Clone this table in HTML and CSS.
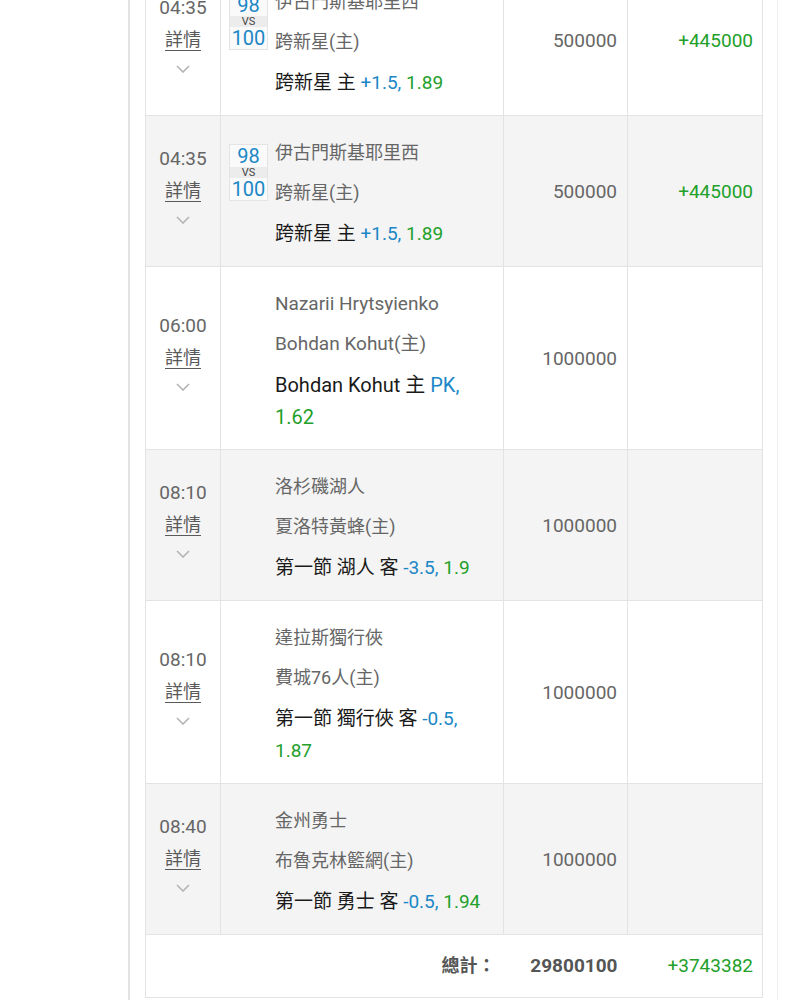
FILE: index.html
```html
<!DOCTYPE html>
<html lang="zh-Hant">
<head>
<meta charset="utf-8">
<title>注單</title>
<link rel="stylesheet" href="styles.css">
</head>
<body>
<div class="frame">
  <table class="bets">
    <colgroup>
      <col class="c-time"><col class="c-match"><col class="c-amount"><col class="c-profit">
    </colgroup>
    <tbody>
      <tr>
        <td class="time-cell">
          <div class="time">04:35</div>
          <div class="detail"><a class="detail-link">詳情</a></div>
          <div class="chev"><svg width="14" height="8" viewBox="0 0 14 8"><path d="M1 1 L7 7 L13 1" fill="none" stroke="#b4b4b4" stroke-width="1.6"/></svg></div>
        </td>
        <td class="match-cell">
          <div class="match">
            <div class="slot">
              <div class="score"><div class="s1">98</div><div class="vs">VS</div><div class="s2">100</div></div>
            </div>
            <div class="info">
              <div class="team">伊古門斯基耶里西</div>
              <div class="team">跨新星(主)</div>
              <div class="bet">跨新星 主 <span class="hc">+1.5,</span> <span class="odds">1.89</span></div>
            </div>
          </div>
        </td>
        <td class="amount">500000</td>
        <td class="profit">+445000</td>
      </tr>
      <tr>
        <td class="time-cell">
          <div class="time">04:35</div>
          <div class="detail"><a class="detail-link">詳情</a></div>
          <div class="chev"><svg width="14" height="8" viewBox="0 0 14 8"><path d="M1 1 L7 7 L13 1" fill="none" stroke="#b4b4b4" stroke-width="1.6"/></svg></div>
        </td>
        <td class="match-cell">
          <div class="match">
            <div class="slot">
              <div class="score"><div class="s1">98</div><div class="vs">VS</div><div class="s2">100</div></div>
            </div>
            <div class="info">
              <div class="team">伊古門斯基耶里西</div>
              <div class="team">跨新星(主)</div>
              <div class="bet">跨新星 主 <span class="hc">+1.5,</span> <span class="odds">1.89</span></div>
            </div>
          </div>
        </td>
        <td class="amount">500000</td>
        <td class="profit">+445000</td>
      </tr>
      <tr>
        <td class="time-cell">
          <div class="time">06:00</div>
          <div class="detail"><a class="detail-link">詳情</a></div>
          <div class="chev"><svg width="14" height="8" viewBox="0 0 14 8"><path d="M1 1 L7 7 L13 1" fill="none" stroke="#b4b4b4" stroke-width="1.6"/></svg></div>
        </td>
        <td class="match-cell">
          <div class="match">
            <div class="slot"></div>
            <div class="info latin">
              <div class="team">Nazarii Hrytsyienko</div>
              <div class="team">Bohdan Kohut(主)</div>
              <div class="bet">Bohdan Kohut 主 <span class="hc">PK,</span> <span class="odds">1.62</span></div>
            </div>
          </div>
        </td>
        <td class="amount">1000000</td>
        <td class="profit"></td>
      </tr>
      <tr>
        <td class="time-cell">
          <div class="time">08:10</div>
          <div class="detail"><a class="detail-link">詳情</a></div>
          <div class="chev"><svg width="14" height="8" viewBox="0 0 14 8"><path d="M1 1 L7 7 L13 1" fill="none" stroke="#b4b4b4" stroke-width="1.6"/></svg></div>
        </td>
        <td class="match-cell">
          <div class="match">
            <div class="slot"></div>
            <div class="info">
              <div class="team">洛杉磯湖人</div>
              <div class="team">夏洛特黃蜂(主)</div>
              <div class="bet">第一節 湖人 客 <span class="hc">-3.5,</span> <span class="odds">1.9</span></div>
            </div>
          </div>
        </td>
        <td class="amount">1000000</td>
        <td class="profit"></td>
      </tr>
      <tr>
        <td class="time-cell">
          <div class="time">08:10</div>
          <div class="detail"><a class="detail-link">詳情</a></div>
          <div class="chev"><svg width="14" height="8" viewBox="0 0 14 8"><path d="M1 1 L7 7 L13 1" fill="none" stroke="#b4b4b4" stroke-width="1.6"/></svg></div>
        </td>
        <td class="match-cell">
          <div class="match">
            <div class="slot"></div>
            <div class="info">
              <div class="team">達拉斯獨行俠</div>
              <div class="team">費城76人(主)</div>
              <div class="bet">第一節 獨行俠 客 <span class="hc">-0.5,</span> <span class="odds">1.87</span></div>
            </div>
          </div>
        </td>
        <td class="amount">1000000</td>
        <td class="profit"></td>
      </tr>
      <tr>
        <td class="time-cell">
          <div class="time">08:40</div>
          <div class="detail"><a class="detail-link">詳情</a></div>
          <div class="chev"><svg width="14" height="8" viewBox="0 0 14 8"><path d="M1 1 L7 7 L13 1" fill="none" stroke="#b4b4b4" stroke-width="1.6"/></svg></div>
        </td>
        <td class="match-cell">
          <div class="match">
            <div class="slot"></div>
            <div class="info">
              <div class="team">金州勇士</div>
              <div class="team">布魯克林籃網(主)</div>
              <div class="bet">第一節 勇士 客 <span class="hc">-0.5,</span> <span class="odds">1.94</span></div>
            </div>
          </div>
        </td>
        <td class="amount">1000000</td>
        <td class="profit"></td>
      </tr>
      <tr class="total">
        <td class="total-label" colspan="2">總計：</td>
        <td class="amount strong">29800100</td>
        <td class="profit">+3743382</td>
      </tr>
    </tbody>
  </table>
</div>
</body>
</html>
```

FILE: styles.css
```css
html, body {
  margin: 0;
  padding: 0;
  background: #ffffff;
}

body {
  font-family: "Roboto", "Noto Sans CJK TC", sans-serif;
  color: #666666;
  overflow: hidden;
}

.frame {
  margin-left: 128px;
  margin-top: -36px;
  width: 617px;
  min-height: 1100px;
  padding: 0 15px;
  border-left: 2px solid #e3e3e3;
  border-right: 1px solid #efefef;
}

.bets {
  width: 617px;
  table-layout: fixed;
  border-collapse: collapse;
}

.c-time { width: 75px; }
.c-match { width: 283px; }
.c-amount { width: 124px; }
.c-profit { width: 135px; }

.bets td {
  border: 1px solid #e3e3e3;
  padding: 17px 0 16px 0;
  vertical-align: middle;
}

.bets tr:nth-child(even) td {
  background: #f4f4f4;
}

.time-cell {
  text-align: center;
}

.time {
  font-size: 19px;
  line-height: 32px;
  color: #666666;
}

.detail {
  font-size: 18px;
  line-height: 32px;
}

.detail-link {
  color: #5a5a5a;
  text-decoration: underline;
  text-underline-offset: 4px;
  text-decoration-thickness: 1px;
}

.chev {
  height: 33px;
  display: flex;
  justify-content: center;
  align-items: flex-start;
}

.chev svg {
  margin-top: 9px;
  display: block;
}

.match {
  display: flex;
  align-items: flex-start;
}

.slot {
  width: 54px;
  flex: none;
}

.score {
  margin-left: 8px;
  margin-top: 11px;
  width: 37px;
  border: 1px solid #e4e4e4;
  text-align: center;
  background: #fafafa;
}

.s1, .s2 {
  font-size: 20px;
  color: #1b87c6;
}

.s1 { line-height: 22px; }
.s2 { line-height: 22px; }

.vs {
  font-size: 11px;
  line-height: 11px;
  color: #444444;
  background: #ececec;
}

.info {
  width: 210px;
  flex: none;
}

.team {
  font-size: 18px;
  line-height: 40px;
  color: #666666;
  white-space: nowrap;
}

.latin .team {
  font-size: 19px;
}

.bet {
  margin-top: 5px;
  font-size: 19px;
  line-height: 32px;
  color: #1a1a1a;
}

.latin .bet {
  font-size: 20px;
}

.hc {
  color: #1b87c6;
}

.odds {
  color: #22a02a;
}

.amount {
  text-align: right;
  padding-right: 10px !important;
  font-size: 19px;
  color: #666666;
}

.profit {
  text-align: right;
  padding-right: 9px !important;
  font-size: 19px;
  color: #22a02a;
}

.total td {
  background: #ffffff;
  border-left: none;
  border-right: none;
  padding-top: 19px;
  padding-bottom: 19px;
  line-height: 24px;
}

.total td:first-child {
  border-left: 1px solid #e3e3e3;
}

.total td:last-child {
  border-right: 1px solid #e3e3e3;
}

.total-label {
  text-align: right;
  padding-right: 8px !important;
  font-size: 18px;
  font-weight: 700;
  color: #555555;
}

.strong {
  font-weight: 700;
  color: #555555;
}
```
